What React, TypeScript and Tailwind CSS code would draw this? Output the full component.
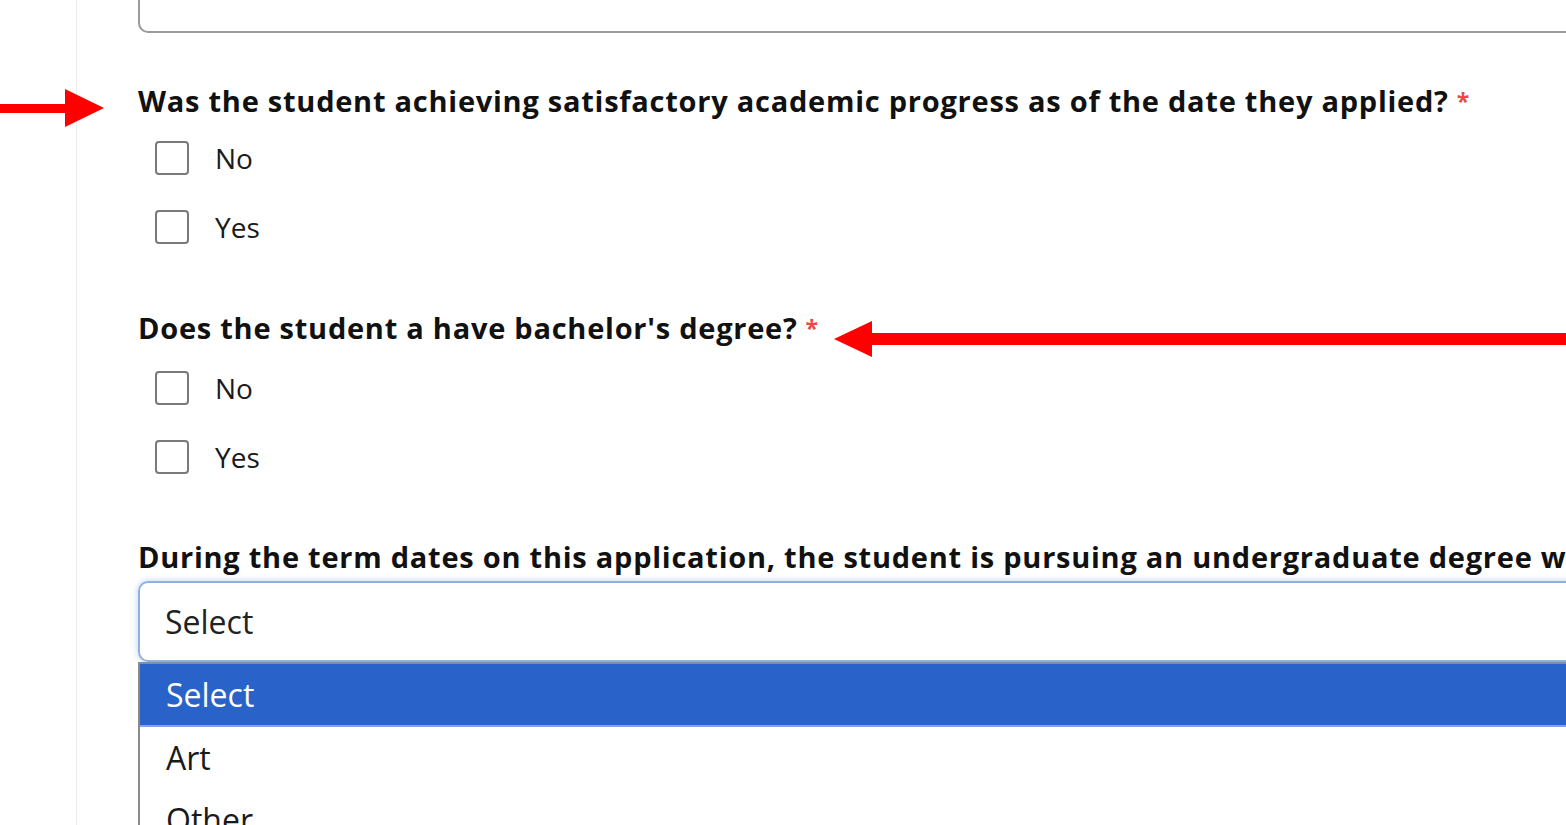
import React from 'react';

const font = { fontFamily: '"Open Sans", "Noto Sans", sans-serif' };

const Checkbox = ({ label }: { label: string }) => (
  <label className="flex items-center h-[46px] pl-[17px] gap-[26px]">
    <span className="w-[34px] h-[34px] border-2 border-[#7a7a7a] rounded-[4px] bg-white shrink-0" />
    <span className="text-[28px] text-[#1a1a1a] leading-none">{label}</span>
  </label>
);

const Question = ({ text, className }: { text: string; className?: string }) => (
  <div className={`h-[38px] leading-[38px] text-[29px] font-bold text-[#111] tracking-[0.75px] ${className ?? ''}`}>
    {text}
    <span className="text-[#f04848] text-[23px] align-top font-bold ml-[8px]">*</span>
  </div>
);

// red annotation arrows drawn over the page
const ArrowRight = () => (
  <svg className="absolute left-0 top-[89px]" width="104" height="40" viewBox="0 0 104 40">
    <rect x="0" y="15" width="70" height="9" fill="#ff0000" />
    <polygon points="65,0 104,19 65,38" fill="#ff0000" />
  </svg>
);

const ArrowLeft = () => (
  <svg className="absolute left-[834px] top-[320px]" width="732" height="38" viewBox="0 0 732 38">
    <polygon points="0,19 38,1 38,37" fill="#ff0000" />
    <rect x="34" y="13" width="698" height="12" fill="#ff0000" />
  </svg>
);

export default function App() {
  return (
    <div className="w-[1566px] h-[825px] overflow-hidden bg-white relative flex" style={font}>
      <div className="w-[77px] shrink-0 border-r border-[#ececec]" />
      <div className="flex-1 pl-[61px] whitespace-nowrap">
        <div className="-mt-[30px] h-[63px] w-[1500px] border-2 border-[#9a9a9a] rounded-[10px]" />

        <Question className="mt-[49px]" text="Was the student achieving satisfactory academic progress as of the date they applied?" />
        <div className="mt-[15px] flex flex-col gap-[23px]">
          <Checkbox label="No" />
          <Checkbox label="Yes" />
        </div>

        <Question className="mt-[59px]" text="Does the student a have bachelor's degree?" />
        <div className="mt-[18px] flex flex-col gap-[23px]">
          <Checkbox label="No" />
          <Checkbox label="Yes" />
        </div>

        <div className="mt-[58px] h-[38px] leading-[38px] text-[29px] font-bold text-[#111] tracking-[0.75px]">
          During the term dates on this application, the student is pursuing an undergraduate degree with a major in
        </div>
        <div className="mt-[5px] w-[1500px] h-[81px] border-2 border-[#8fb1e0] rounded-[10px] shadow-[0_0_6px_rgba(120,160,220,0.5)] flex items-center pl-[25px] text-[32px] text-[#222]">
          Select
        </div>
        <div className="w-[1500px] border-l-2 border-[#8a8a8a] border-t-2 border-t-[#7d8fa8]">
          <div className="h-[63px] bg-[#2963c9] border-b-2 border-[#7fa7e6] flex items-center pl-[26px] text-[32px] text-white">Select</div>
          <div className="h-[62px] flex items-center pl-[26px] text-[32px] text-[#1a1a1a]">Art</div>
          <div className="h-[62px] flex items-center pl-[26px] text-[32px] text-[#1a1a1a]">Other</div>
        </div>
      </div>
      <ArrowRight />
      <ArrowLeft />
    </div>
  );
}
